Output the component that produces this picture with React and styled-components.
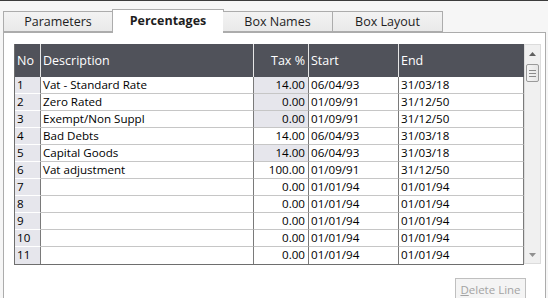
import React from "react";
import styled, { createGlobalStyle } from "styled-components";

const Global = createGlobalStyle`
  html, body { margin: 0; padding: 0; }
  body {
    width: 548px; height: 298px; overflow: hidden;
    background: #f0f0f0;
    font-family: "Segoe UI", "Open Sans", "Noto Sans", sans-serif;
  }
`;

const Window = styled.div`
  width: 548px;
  height: 298px;
  border-top: 1px solid #3c3c3c;
  box-sizing: border-box;
  padding: 8px 2px 0 3px;
  display: flex;
  flex-direction: column;
  background: #f6f6f6;
`;

const TabBar = styled.div`
  display: flex;
  align-items: flex-end;
  height: 23px;
  position: relative;
  z-index: 1;
`;

const Tab = styled.div`
  box-sizing: border-box;
  width: ${(p) => (p.$active ? 112 : 110)}px;
  margin: 0 ${(p) => (p.$active ? -1 : 0)}px;
  height: ${(p) => (p.$active ? 24 : 21)}px;
  margin-bottom: ${(p) => (p.$active ? -1 : 0)}px;
  border: 1px solid #acacac;
  border-bottom: ${(p) => (p.$active ? "none" : "1px solid #acacac")};
  border-left: ${(p) => (p.$first || p.$active ? "1px solid #acacac" : "none")};
  background: ${(p) => (p.$active ? "#ffffff" : "linear-gradient(#f3f3f3, #e9e9e9)")};
  font-size: 12.5px;
  font-weight: ${(p) => (p.$active ? 700 : 400)};
  color: #1e1e1e;
  display: flex;
  align-items: center;
  justify-content: center;
  padding-bottom: ${(p) => (p.$active ? 2 : 0)}px;
`;

const Panel = styled.div`
  flex: 1;
  background: #ffffff;
  border: 1px solid #acacac;
  border-bottom: none;
  padding: 11px 4px 0 10px;
  display: flex;
  flex-direction: column;
`;

const GridWrap = styled.div`
  display: flex;
  width: 527px;
`;

const Table = styled.div`
  border-left: 1px solid #6e6e6e;
  border-bottom: 1px solid #6e6e6e;
  display: flex;
  flex-direction: column;
`;

const cols = [26, 213, 55, 90, 125];

const HeadRow = styled.div`
  display: flex;
  height: 33px;
  background: #50525a;
`;

const HeadCell = styled.div`
  box-sizing: border-box;
  width: ${(p) => p.$w}px;
  border-right: 1px solid ${(p) => (p.$last ? "#50525a" : "#e6e6e6")};
  color: #ffffff;
  font-size: 12.5px;
  display: flex;
  align-items: center;
  justify-content: ${(p) => (p.$right ? "flex-end" : "flex-start")};
  padding: 0 3px 0 2px;
  white-space: nowrap;
`;

const Row = styled.div`
  display: flex;
  height: 17px;
`;

const Cell = styled.div`
  box-sizing: border-box;
  width: ${(p) => p.$w}px;
  height: 17px;
  border-right: 1px solid #7a7a7a;
  border-bottom: ${(p) => (p.$lastRow ? "none" : "1px solid #c6c6c6")};
  background: ${(p) => (p.$shade ? "#e6e6ec" : "#ffffff")};
  color: #000;
  font-size: 11.6px;
  line-height: 16px;
  padding: 0 3px 0 2px;
  text-align: ${(p) => (p.$right ? "right" : "left")};
  white-space: nowrap;
  overflow: hidden;
`;

const NoCell = styled(Cell)`
  background: #e6e6ec;
  border-bottom: ${(p) => (p.$lastRow ? "none" : "1px solid #ffffff")};
  padding-left: 2px;
`;

const ScrollBar = styled.div`
  box-sizing: border-box;
  width: 17px;
  height: 220px;
  background: #f0f0f0;
  border: 1px solid #dcdcdc;
  display: flex;
  flex-direction: column;
  align-items: center;
`;

const ArrowBtn = styled.div`
  width: 15px;
  height: 17px;
  display: flex;
  align-items: center;
  justify-content: center;
`;

const Thumb = styled.div`
  box-sizing: border-box;
  width: 13px;
  height: 18px;
  margin-top: 2px;
  border: 1px solid #9a9a9a;
  border-radius: 2px;
  background: linear-gradient(90deg, #f4f4f4, #e6e6e6);
  display: flex;
  flex-direction: column;
  align-items: center;
  justify-content: center;
  gap: 2px;
`;

const Grip = styled.div`
  width: 7px;
  height: 1px;
  background: #8a8a8a;
`;

const Spacer = styled.div`
  flex: 1;
`;

const Footer = styled.div`
  display: flex;
  justify-content: flex-end;
  padding: 13px 15px 0 0;
`;

const Button = styled.button`
  box-sizing: border-box;
  width: 71px;
  height: 23px;
  border: 1px solid #bfbfbf;
  background: #f4f4f4;
  color: #a3a3a3;
  font-family: inherit;
  font-size: 11.5px;
  padding: 0;
  u { text-decoration: underline; }
`;

const rows = [
  ["1", "Vat - Standard Rate", "14.00", "06/04/93", "31/03/18", true],
  ["2", "Zero Rated", "0.00", "01/09/91", "31/12/50", true],
  ["3", "Exempt/Non Suppl", "0.00", "01/09/91", "31/12/50", true],
  ["4", "Bad Debts", "14.00", "06/04/93", "31/03/18", false],
  ["5", "Capital Goods", "14.00", "06/04/93", "31/03/18", true],
  ["6", "Vat adjustment", "100.00", "01/09/91", "31/12/50", false],
  ["7", "", "0.00", "01/01/94", "01/01/94", false],
  ["8", "", "0.00", "01/01/94", "01/01/94", false],
  ["9", "", "0.00", "01/01/94", "01/01/94", false],
  ["10", "", "0.00", "01/01/94", "01/01/94", false],
  ["11", "", "0.00", "01/01/94", "01/01/94", false],
];

export default function App() {
  return (
    <>
      <Global />
      <Window>
        <TabBar>
          <Tab $first>Parameters</Tab>
          <Tab $active>Percentages</Tab>
          <Tab>Box Names</Tab>
          <Tab>Box Layout</Tab>
        </TabBar>
        <Panel>
          <GridWrap>
            <Table>
              <HeadRow>
                <HeadCell $w={cols[0]}>No</HeadCell>
                <HeadCell $w={cols[1]}>Description</HeadCell>
                <HeadCell $w={cols[2]} $right>Tax %</HeadCell>
                <HeadCell $w={cols[3]}>Start</HeadCell>
                <HeadCell $w={cols[4]} $last>End</HeadCell>
              </HeadRow>
              {rows.map((r, i) => {
                const last = i === rows.length - 1;
                return (
                  <Row key={r[0]}>
                    <NoCell $w={cols[0]} $lastRow={last}>{r[0]}</NoCell>
                    <Cell $w={cols[1]} $lastRow={last}>{r[1]}</Cell>
                    <Cell $w={cols[2]} $lastRow={last} $right $shade={r[5]}>{r[2]}</Cell>
                    <Cell $w={cols[3]} $lastRow={last}>{r[3]}</Cell>
                    <Cell $w={cols[4]} $lastRow={last}>{r[4]}</Cell>
                  </Row>
                );
              })}
            </Table>
            <ScrollBar>
              <ArrowBtn>
                <svg width="7" height="4" viewBox="0 0 7 4"><path d="M0 4 L3.5 0 L7 4 Z" fill="#606060" /></svg>
              </ArrowBtn>
              <Thumb>
                <Grip /><Grip /><Grip />
              </Thumb>
              <Spacer />
              <ArrowBtn>
                <svg width="7" height="4" viewBox="0 0 7 4"><path d="M0 0 L3.5 4 L7 0 Z" fill="#909090" /></svg>
              </ArrowBtn>
            </ScrollBar>
          </GridWrap>
          <Footer>
            <Button disabled><u>D</u>elete Line</Button>
          </Footer>
        </Panel>
      </Window>
    </>
  );
}
